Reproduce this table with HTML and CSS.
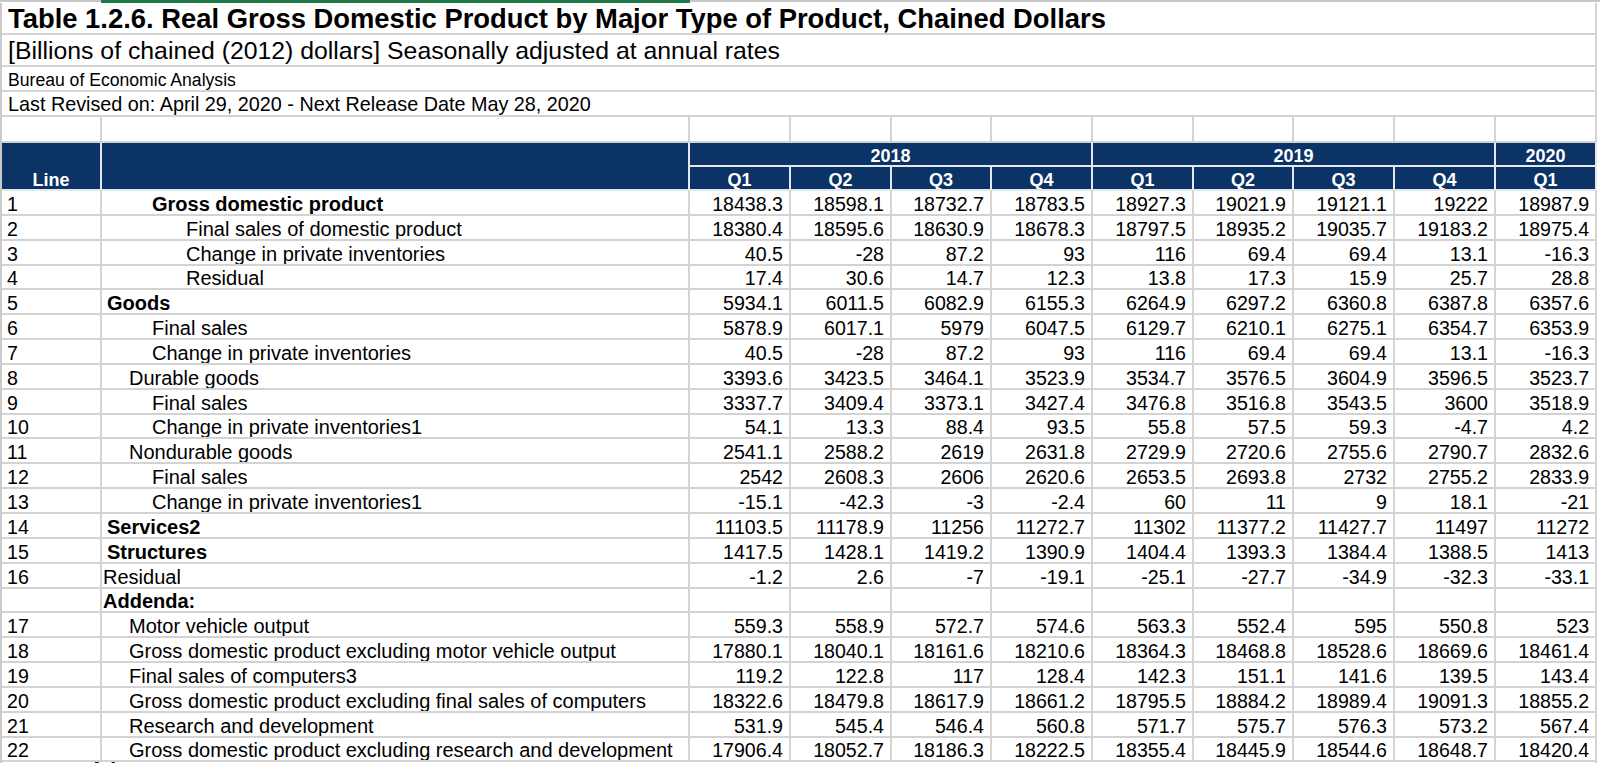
FILE: index.html
```html
<!DOCTYPE html>
<html>
<head>
<meta charset="utf-8">
<link rel="stylesheet" href="styles.css">
</head>
<body>
<div class="colbar">
  <div class="seg gray w1"></div>
  <div class="seg green"></div>
  <div class="seg gray grow"></div>
</div>
<table class="sheet">
  <colgroup>
    <col class="c-line"><col class="c-label">
    <col class="c-q"><col class="c-q"><col class="c-q2"><col class="c-q"><col class="c-q"><col class="c-q2"><col class="c-q"><col class="c-q"><col class="c-q">
  </colgroup>
  <tbody>
    <tr class="r-title"><td colspan="11" class="title">Table 1.2.6. Real Gross Domestic Product by Major Type of Product, Chained Dollars</td></tr>
    <tr class="r-sub"><td colspan="11" class="sub">[Billions of chained (2012) dollars] Seasonally adjusted at annual rates</td></tr>
    <tr class="r-meta"><td colspan="11" class="meta">Bureau of Economic Analysis</td></tr>
    <tr class="r-meta"><td colspan="11" class="meta meta-lg">Last Revised on: April 29, 2020 - Next Release Date May 28, 2020</td></tr>
    <tr class="r-empty"><td></td><td></td><td></td><td></td><td></td><td></td><td></td><td></td><td></td><td></td><td></td></tr>
    <tr class="r-head">
      <td rowspan="2" class="hd hd-line">Line</td>
      <td rowspan="2" class="hd"></td>
      <td colspan="4" class="hd">2018</td>
      <td colspan="4" class="hd">2019</td>
      <td class="hd">2020</td>
    </tr>
    <tr class="r-head">
      <td class="hd">Q1</td><td class="hd">Q2</td><td class="hd">Q3</td><td class="hd">Q4</td>
      <td class="hd">Q1</td><td class="hd">Q2</td><td class="hd">Q3</td><td class="hd">Q4</td>
      <td class="hd">Q1</td>
    </tr>
    <tr class="r-data"><td class="ln">1</td><td class="lb i2 b">Gross domestic product</td><td>18438.3</td><td>18598.1</td><td>18732.7</td><td>18783.5</td><td>18927.3</td><td>19021.9</td><td>19121.1</td><td>19222</td><td>18987.9</td></tr>
    <tr class="r-data"><td class="ln">2</td><td class="lb i3">Final sales of domestic product</td><td>18380.4</td><td>18595.6</td><td>18630.9</td><td>18678.3</td><td>18797.5</td><td>18935.2</td><td>19035.7</td><td>19183.2</td><td>18975.4</td></tr>
    <tr class="r-data"><td class="ln">3</td><td class="lb i3">Change in private inventories</td><td>40.5</td><td>-28</td><td>87.2</td><td>93</td><td>116</td><td>69.4</td><td>69.4</td><td>13.1</td><td>-16.3</td></tr>
    <tr class="r-data"><td class="ln">4</td><td class="lb i3">Residual</td><td>17.4</td><td>30.6</td><td>14.7</td><td>12.3</td><td>13.8</td><td>17.3</td><td>15.9</td><td>25.7</td><td>28.8</td></tr>
    <tr class="r-data"><td class="ln">5</td><td class="lb i0b b">Goods</td><td>5934.1</td><td>6011.5</td><td>6082.9</td><td>6155.3</td><td>6264.9</td><td>6297.2</td><td>6360.8</td><td>6387.8</td><td>6357.6</td></tr>
    <tr class="r-data"><td class="ln">6</td><td class="lb i2">Final sales</td><td>5878.9</td><td>6017.1</td><td>5979</td><td>6047.5</td><td>6129.7</td><td>6210.1</td><td>6275.1</td><td>6354.7</td><td>6353.9</td></tr>
    <tr class="r-data"><td class="ln">7</td><td class="lb i2">Change in private inventories</td><td>40.5</td><td>-28</td><td>87.2</td><td>93</td><td>116</td><td>69.4</td><td>69.4</td><td>13.1</td><td>-16.3</td></tr>
    <tr class="r-data"><td class="ln">8</td><td class="lb i1">Durable goods</td><td>3393.6</td><td>3423.5</td><td>3464.1</td><td>3523.9</td><td>3534.7</td><td>3576.5</td><td>3604.9</td><td>3596.5</td><td>3523.7</td></tr>
    <tr class="r-data"><td class="ln">9</td><td class="lb i2">Final sales</td><td>3337.7</td><td>3409.4</td><td>3373.1</td><td>3427.4</td><td>3476.8</td><td>3516.8</td><td>3543.5</td><td>3600</td><td>3518.9</td></tr>
    <tr class="r-data"><td class="ln">10</td><td class="lb i2">Change in private inventories1</td><td>54.1</td><td>13.3</td><td>88.4</td><td>93.5</td><td>55.8</td><td>57.5</td><td>59.3</td><td>-4.7</td><td>4.2</td></tr>
    <tr class="r-data"><td class="ln">11</td><td class="lb i1">Nondurable goods</td><td>2541.1</td><td>2588.2</td><td>2619</td><td>2631.8</td><td>2729.9</td><td>2720.6</td><td>2755.6</td><td>2790.7</td><td>2832.6</td></tr>
    <tr class="r-data"><td class="ln">12</td><td class="lb i2">Final sales</td><td>2542</td><td>2608.3</td><td>2606</td><td>2620.6</td><td>2653.5</td><td>2693.8</td><td>2732</td><td>2755.2</td><td>2833.9</td></tr>
    <tr class="r-data"><td class="ln">13</td><td class="lb i2">Change in private inventories1</td><td>-15.1</td><td>-42.3</td><td>-3</td><td>-2.4</td><td>60</td><td>11</td><td>9</td><td>18.1</td><td>-21</td></tr>
    <tr class="r-data"><td class="ln">14</td><td class="lb i0b b">Services2</td><td>11103.5</td><td>11178.9</td><td>11256</td><td>11272.7</td><td>11302</td><td>11377.2</td><td>11427.7</td><td>11497</td><td>11272</td></tr>
    <tr class="r-data"><td class="ln">15</td><td class="lb i0b b">Structures</td><td>1417.5</td><td>1428.1</td><td>1419.2</td><td>1390.9</td><td>1404.4</td><td>1393.3</td><td>1384.4</td><td>1388.5</td><td>1413</td></tr>
    <tr class="r-data"><td class="ln">16</td><td class="lb i0">Residual</td><td>-1.2</td><td>2.6</td><td>-7</td><td>-19.1</td><td>-25.1</td><td>-27.7</td><td>-34.9</td><td>-32.3</td><td>-33.1</td></tr>
    <tr class="r-data"><td class="ln"></td><td class="lb i0 b">Addenda:</td><td></td><td></td><td></td><td></td><td></td><td></td><td></td><td></td><td></td></tr>
    <tr class="r-data"><td class="ln">17</td><td class="lb i1">Motor vehicle output</td><td>559.3</td><td>558.9</td><td>572.7</td><td>574.6</td><td>563.3</td><td>552.4</td><td>595</td><td>550.8</td><td>523</td></tr>
    <tr class="r-data"><td class="ln">18</td><td class="lb i1">Gross domestic product excluding motor vehicle output</td><td>17880.1</td><td>18040.1</td><td>18161.6</td><td>18210.6</td><td>18364.3</td><td>18468.8</td><td>18528.6</td><td>18669.6</td><td>18461.4</td></tr>
    <tr class="r-data"><td class="ln">19</td><td class="lb i1">Final sales of computers3</td><td>119.2</td><td>122.8</td><td>117</td><td>128.4</td><td>142.3</td><td>151.1</td><td>141.6</td><td>139.5</td><td>143.4</td></tr>
    <tr class="r-data"><td class="ln">20</td><td class="lb i1">Gross domestic product excluding final sales of computers</td><td>18322.6</td><td>18479.8</td><td>18617.9</td><td>18661.2</td><td>18795.5</td><td>18884.2</td><td>18989.4</td><td>19091.3</td><td>18855.2</td></tr>
    <tr class="r-data"><td class="ln">21</td><td class="lb i1">Research and development</td><td>531.9</td><td>545.4</td><td>546.4</td><td>560.8</td><td>571.7</td><td>575.7</td><td>576.3</td><td>573.2</td><td>567.4</td></tr>
    <tr class="r-data"><td class="ln">22</td><td class="lb i1">Gross domestic product excluding research and development</td><td>17906.4</td><td>18052.7</td><td>18186.3</td><td>18222.5</td><td>18355.4</td><td>18445.9</td><td>18544.6</td><td>18648.7</td><td>18420.4</td></tr>
    <tr class="r-foot"><td colspan="11" class="foot">Legend / Footnotes:</td></tr>
  </tbody>
</table>
</body>
</html>
```
FILE: styles.css
```css
* { box-sizing: border-box; }
html, body {
  margin: 0;
  padding: 0;
  background: #ffffff;
  overflow: hidden;
}
body {
  width: 1600px;
  height: 763px;
  font-family: "Liberation Sans", Arial, Helvetica, sans-serif;
  color: #000;
}
.colbar {
  display: flex;
  align-items: flex-start;
  height: 3px;
}
.seg { height: 2px; }
.gray { background: #c8c8c8; }
.w1 { width: 101px; }
.green { width: 589px; height: 3px; background: #1f7a47; }
.grow { flex: 1; }

.sheet {
  border-collapse: separate;
  border-spacing: 0;
  table-layout: fixed;
  width: 1597px;
  border-left: 2px solid #cacaca;
}
.c-line { width: 100px; }
.c-label { width: 588px; }
.c-q { width: 101px; }
.c-q2 { width: 100px; }

.sheet td {
  border-right: 2px solid #d3d3d3;
  border-bottom: 2px solid #d3d3d3;
  padding: 0 6px 0 0;
  white-space: nowrap;
  overflow: hidden;
  vertical-align: bottom;
  text-align: right;
  font-size: 19.6px;
  line-height: 20px;
}

.r-title td { height: 32px; }
.r-sub td { height: 32px; }
.r-meta td { height: 25px; }
.r-empty td { height: 26px; }
.r-head td { height: 24px; }
.r-data td { height: 24.85px; }
.r-foot td { height: 30px; }

.sheet td.title {
  text-align: left;
  padding-left: 6px;
  font-weight: bold;
  font-size: 27.4px;
  line-height: 29px;
}
.sheet td.sub {
  text-align: left;
  padding-left: 6px;
  font-size: 24.8px;
  line-height: 29px;
}
.sheet td.meta {
  text-align: left;
  padding-left: 6px;
  font-size: 17.6px;
  line-height: 19px;
}
.sheet td.meta-lg {
  font-size: 19.8px;
  line-height: 22px;
}
.sheet td.foot {
  text-align: left;
  padding-left: 6px;
  font-weight: bold;
  font-size: 26px;
  vertical-align: top;
}

.sheet td.hd {
  background: #0b3366;
  color: #ffffff;
  font-weight: bold;
  font-size: 18px;
  line-height: 18px;
  text-align: center;
  padding: 0;
  border-right-color: #e4e8ee;
  border-bottom-color: #e4e8ee;
}

.sheet td.ln {
  text-align: left;
  padding-left: 5px;
}
.sheet td.lb { text-align: left; padding-right: 0; font-size: 20px; }
.b { font-weight: bold; }
.sheet td.i0 { padding-left: 1px; }
.sheet td.i0b { padding-left: 5px; }
.sheet td.i1 { padding-left: 27px; }
.sheet td.i2 { padding-left: 50px; }
.sheet td.i3 { padding-left: 84px; }
```
